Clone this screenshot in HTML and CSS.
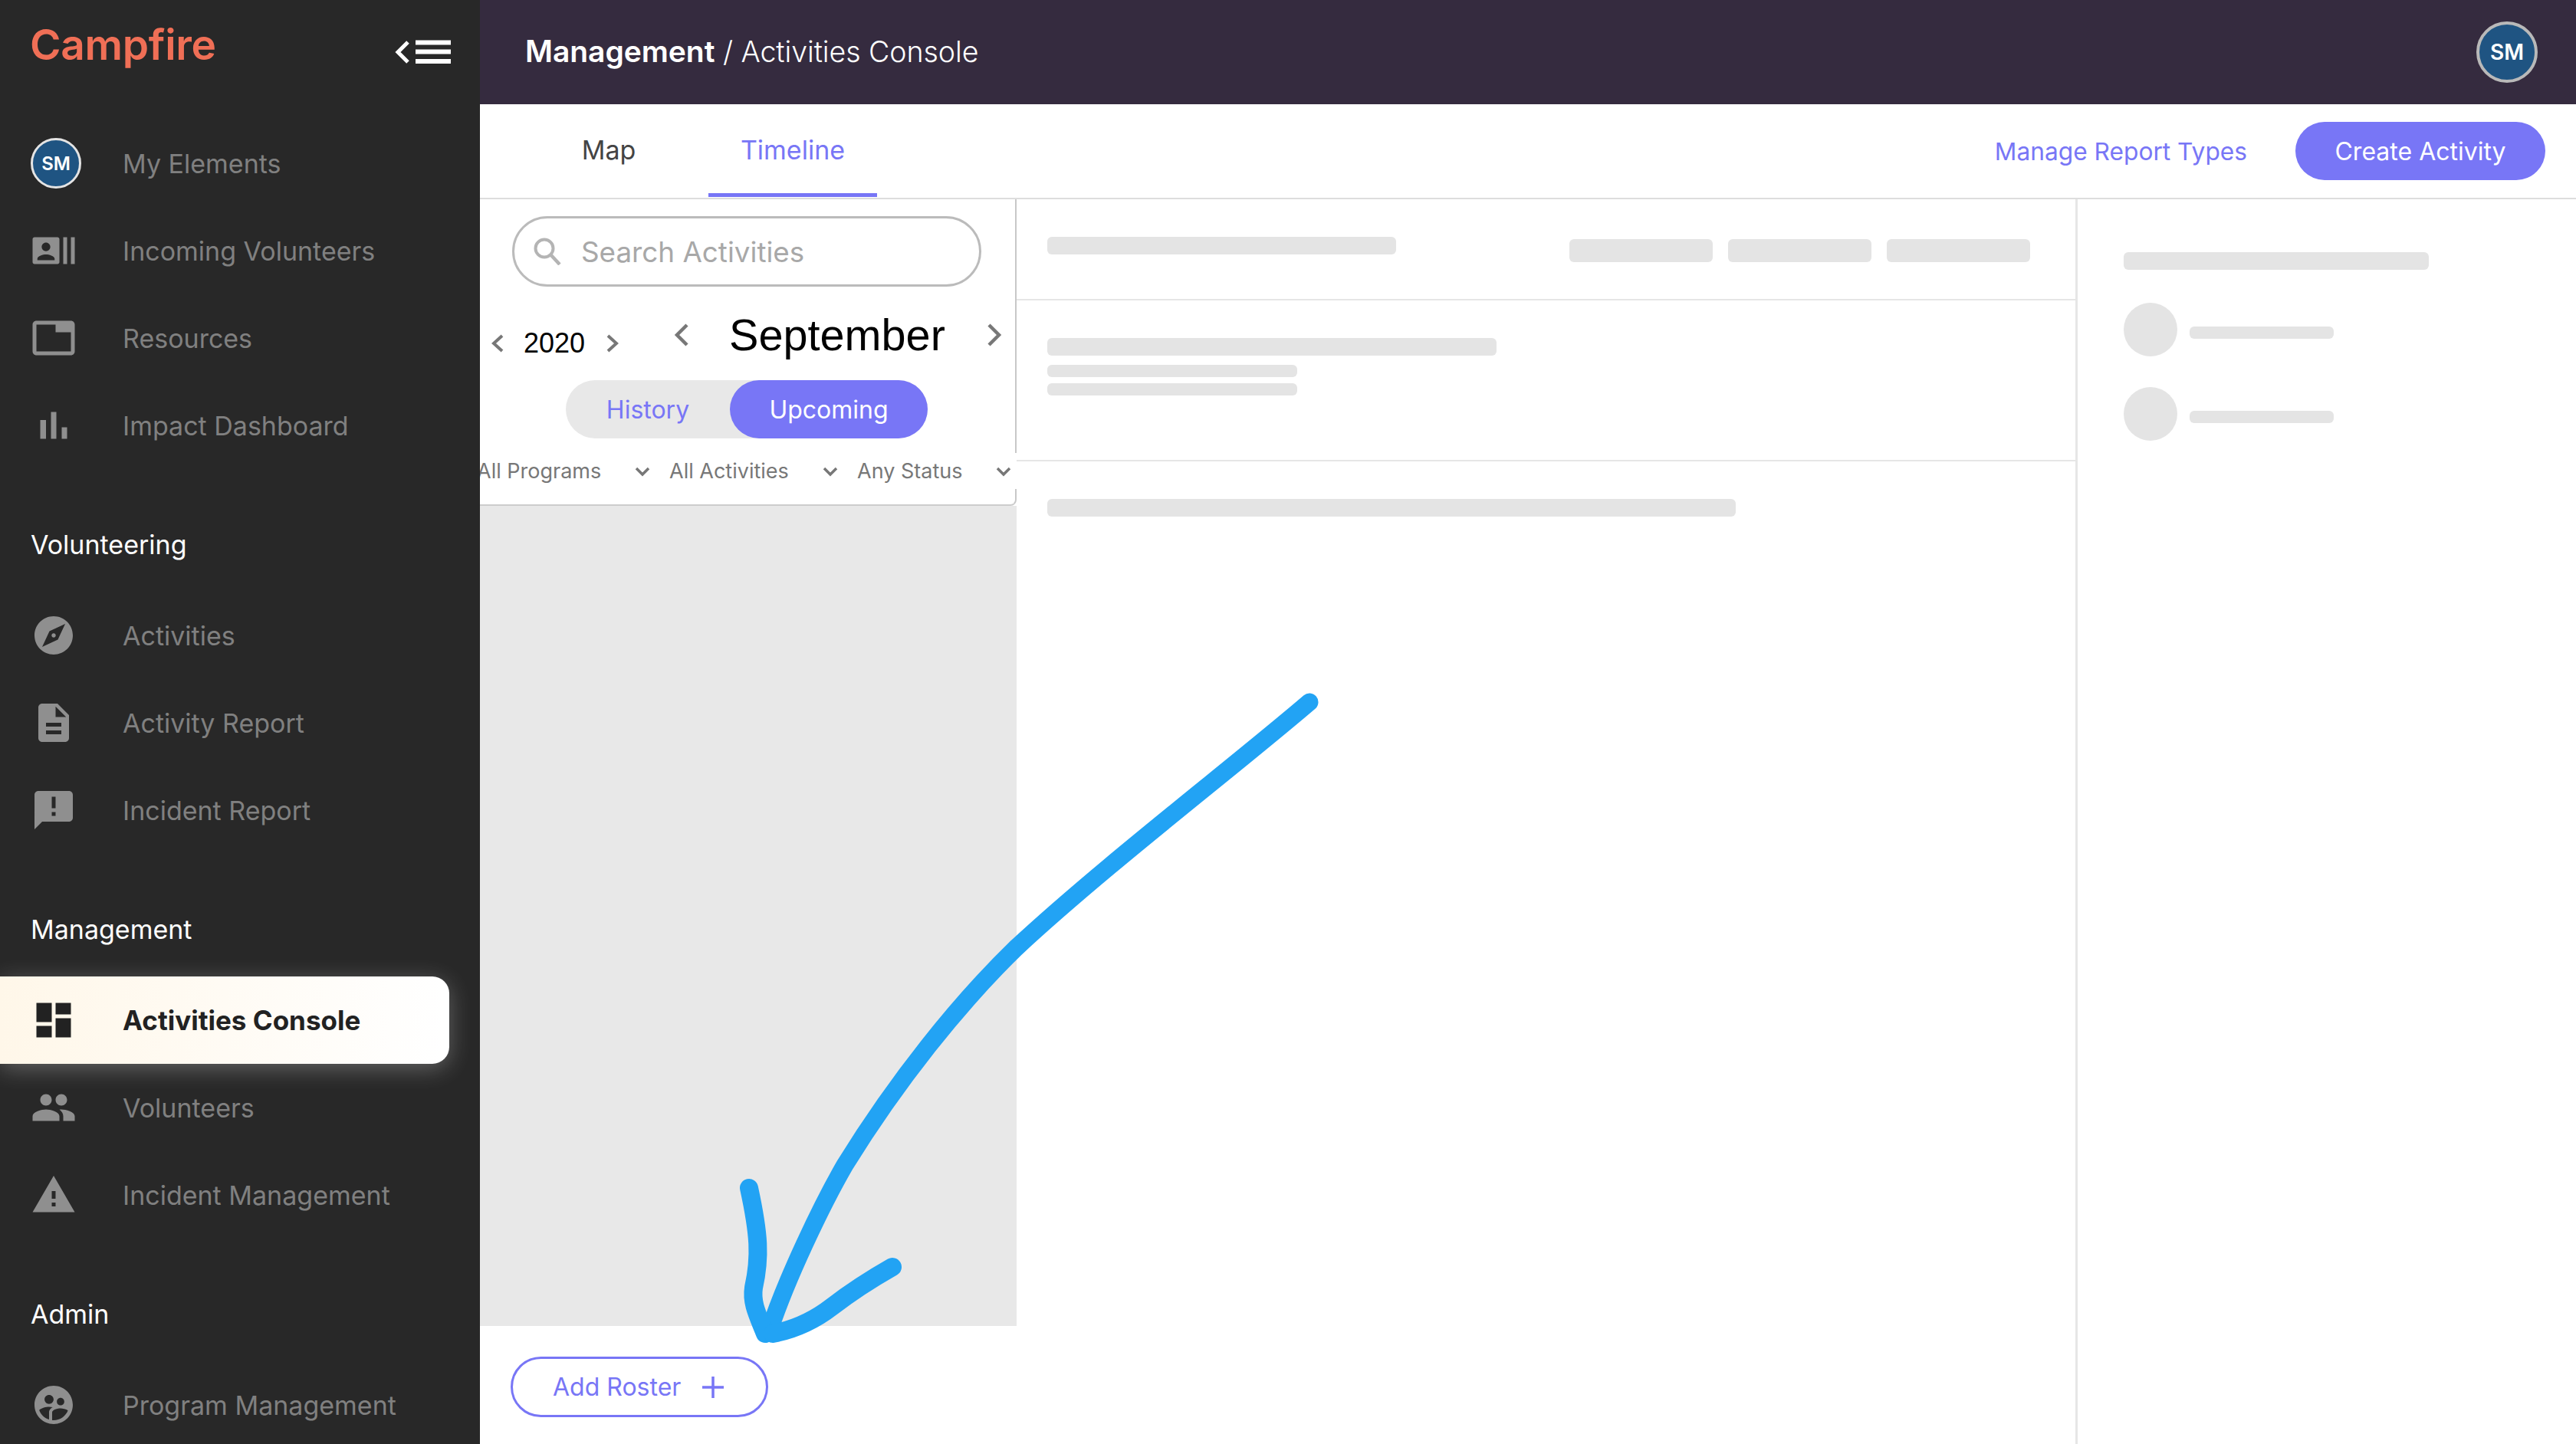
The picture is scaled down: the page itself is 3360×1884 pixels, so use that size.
FILE: index.html
```html
<!DOCTYPE html>
<html lang="en">
<head>
  <meta charset="UTF-8" />
  <title>Campfire - Activities Console</title>
  <link rel="stylesheet" href="styles.css">
</head>
<body>
  <div class="app">
    <aside class="sidebar">
      <div class="side-head">
        <div class="logo">Campfire</div>
        <svg class="collapse" width="74" height="32" viewBox="0 0 74 32">
          <path d="M17 3 L4 16 L17 29" fill="none" stroke="#fff" stroke-width="5"/>
          <path d="M27 3.500h46M27 15.500h46M27 28h46" fill="none" stroke="#fff" stroke-width="6"/>
        </svg>
      </div>

      <nav class="nav">
        <a class="nav-item"><span class="avatar avatar-small">SM</span><span>My Elements</span></a>
        <a class="nav-item"><svg class="nav-icon" viewBox="0 0 24 24"><path d="M21 5v14h2V5h-2zm-4 14h2V5h-2v14zM14 5H2c-.55 0-1 .45-1 1v12c0 .55.45 1 1 1h12c.55 0 1-.45 1-1V6c0-.55-.45-1-1-1zM8 7.750c1.240 0 2.250 1.010 2.250 2.250S9.240 12.250 8 12.250 5.750 11.240 5.750 10 6.760 7.750 8 7.750zM12.500 17h-9v-.75c0-1.500 3-2.250 4.500-2.250s4.500.75 4.500 2.250V17z"/></svg><span>Incoming Volunteers</span></a>
        <a class="nav-item"><svg class="nav-icon" viewBox="0 0 24 24"><path d="M21 3H3c-1.100 0-2 .9-2 2v14c0 1.100.9 2 2 2h18c1.100 0 2-.9 2-2V5c0-1.100-.9-2-2-2zm0 16H3V5h10v4h8v10z"/></svg><span>Resources</span></a>
        <a class="nav-item"><svg class="nav-icon" viewBox="0 0 24 24"><path d="M5 9.200h3V19H5zM10.600 5h2.800v14h-2.800zm5.600 8H19v6h-2.800z"/></svg><span>Impact Dashboard</span></a>

        <div class="nav-label">Volunteering</div>
        <a class="nav-item"><svg class="nav-icon" viewBox="0 0 24 24"><path d="M12 10.900c-.61 0-1.100.49-1.100 1.100s.49 1.100 1.100 1.100c.61 0 1.100-.49 1.100-1.100s-.49-1.100-1.100-1.100zM12 2C6.480 2 2 6.480 2 12s4.480 10 10 10 10-4.480 10-10S17.520 2 12 2zm2.190 12.190L6 18l3.810-8.190L18 6l-3.810 8.190z"/></svg><span>Activities</span></a>
        <a class="nav-item"><svg class="nav-icon" viewBox="0 0 24 24"><path d="M14 2H6c-1.100 0-1.990.9-1.990 2L4 20c0 1.100.89 2 1.990 2H18c1.100 0 2-.9 2-2V8l-6-6zm2 16H8v-2h8v2zm0-4H8v-2h8v2zm-3-5V3.500L18.500 9H13z"/></svg><span>Activity Report</span></a>
        <a class="nav-item"><svg class="nav-icon" viewBox="0 0 24 24"><path d="M20 2H4c-1.100 0-1.990.9-1.990 2L2 22l4-4h14c1.100 0 2-.9 2-2V4c0-1.100-.9-2-2-2zm-7 9h-2V5h2v6zm0 4h-2v-2h2v2z"/></svg><span>Incident Report</span></a>

        <div class="nav-label">Management</div>
        <a class="nav-item active"><svg class="nav-icon" viewBox="0 0 24 24"><path d="M3 13h8V3H3v10zm0 8h8v-6H3v6zm10 0h8V11h-8v10zm0-18v6h8V3h-8z"/></svg><span>Activities Console</span></a>
        <a class="nav-item"><svg class="nav-icon" viewBox="0 0 24 24"><path d="M16 11c1.660 0 2.990-1.340 2.990-3S17.660 5 16 5c-1.660 0-3 1.340-3 3s1.340 3 3 3zm-8 0c1.660 0 2.990-1.340 2.990-3S9.660 5 8 5C6.340 5 5 6.340 5 8s1.340 3 3 3zm0 2c-2.330 0-7 1.170-7 3.500V19h14v-2.500c0-2.330-4.670-3.500-7-3.500zm8 0c-.29 0-.62.02-.97.05 1.160.84 1.970 1.970 1.970 3.450V19h6v-2.500c0-2.330-4.670-3.500-7-3.500z"/></svg><span>Volunteers</span></a>
        <a class="nav-item"><svg class="nav-icon" viewBox="0 0 24 24"><path d="M1 21h22L12 2 1 21zm12-3h-2v-2h2v2zm0-4h-2v-4h2v4z"/></svg><span>Incident Management</span></a>

        <div class="nav-label">Admin</div>
        <a class="nav-item"><svg class="nav-icon" viewBox="0 0 24 24"><path d="M11.990 2c-5.520 0-10 4.480-10 10s4.480 10 10 10 10-4.480 10-10-4.480-10-10-10zm3.610 6.340c1.070 0 1.930.86 1.930 1.930 0 1.070-.86 1.930-1.930 1.930-1.070 0-1.930-.86-1.930-1.930-.01-1.070.86-1.930 1.930-1.930zm-6-1.580c1.300 0 2.360 1.060 2.360 2.360 0 1.300-1.060 2.360-2.360 2.360s-2.360-1.060-2.360-2.360c0-1.310 1.050-2.360 2.360-2.360zm0 9.130v3.750c-2.400-.75-4.300-2.600-5.140-4.960 1.050-1.120 3.670-1.690 5.140-1.690.53 0 1.200.08 1.900.22-1.640.87-1.900 2.020-1.900 2.680zM11.990 20c-.27 0-.53-.01-.79-.04v-4.070c0-1.420 2.940-2.130 4.400-2.130 1.070 0 2.920.39 3.840 1.150-1.170 2.970-4.060 5.090-7.450 5.090z"/></svg><span>Program Management</span></a>
      </nav>
    </aside>

    <main class="main">
      <header class="topbar">
        <div class="crumbs"><b>Management</b> / Activities Console</div>
        <span class="avatar avatar-top">SM</span>
      </header>

      <div class="tabs">
        <a class="tab">Map</a>
        <a class="tab tab-on">Timeline</a>
        <div class="tab-actions">
          <a class="link">Manage Report Types</a>
          <a class="btn-create">Create Activity</a>
        </div>
      </div>

      <div class="content">
        <section class="left">
          <div class="card">
            <div class="search">
              <svg width="36" height="36" viewBox="0 0 36 36"><circle cx="14" cy="14" r="11.500" fill="none" stroke="#b4b4b4" stroke-width="4"/><path d="M22 22 L34 35" stroke="#b4b4b4" stroke-width="4.500"/></svg>
              <span>Search Activities</span>
            </div>
            <div class="date-row">
              <div class="year">
                <svg class="chev-s" viewBox="0 0 16 24"><path d="M14 2 L3 12 L14 22"/></svg>
                <span>2020</span>
                <svg class="chev-s" viewBox="0 0 16 24"><path d="M2 2 L13 12 L2 22"/></svg>
              </div>
              <div class="month">
                <svg class="chev-m" viewBox="0 0 20 30"><path d="M17 2 L4 15 L17 28"/></svg>
                <span>September</span>
                <svg class="chev-m" viewBox="0 0 20 30"><path d="M3 2 L16 15 L3 28"/></svg>
              </div>
            </div>
            <div class="toggle">
              <span class="toggle-off">History</span>
              <span class="toggle-on">Upcoming</span>
            </div>
            <div class="filters">
              <div class="filter f-programs"><span>All Programs</span><svg class="chev-d" viewBox="0 0 20 14"><path d="M2 3 L10 11 L18 3"/></svg></div>
              <div class="filter f-activities"><span>All Activities</span><svg class="chev-d" viewBox="0 0 20 14"><path d="M2 3 L10 11 L18 3"/></svg></div>
              <div class="filter f-status"><span>Any Status</span><svg class="chev-d" viewBox="0 0 20 14"><path d="M2 3 L10 11 L18 3"/></svg></div>
            </div>
          </div>
          <div class="roster-list"></div>
          <div class="roster-foot">
            <a class="btn-roster">
              <span>Add Roster</span>
              <svg width="28" height="28" viewBox="0 0 28 28"><path d="M14 0v28M0 14h28" stroke="#7876f6" stroke-width="3.500"/></svg>
            </a>
          </div>
        </section>

        <section class="middle">
          <div class="row row-one">
            <div class="skel s-455"></div>
            <div class="skel-group">
              <div class="skel s-chip"></div>
              <div class="skel s-chip"></div>
              <div class="skel s-chip"></div>
            </div>
          </div>
          <div class="row row-two">
            <div class="skel s-586"></div>
            <div class="skel s-326 first"></div>
            <div class="skel s-326"></div>
          </div>
          <div class="row-three">
            <div class="skel s-898"></div>
          </div>
        </section>

        <section class="right">
          <div class="skel s-398"></div>
          <div class="person">
            <div class="skel-dot"></div>
            <div class="skel s-188"></div>
          </div>
          <div class="person">
            <div class="skel-dot"></div>
            <div class="skel s-188"></div>
          </div>
        </section>
      </div>
    </main>

    <!-- hand drawn arrow sits over the whole page -->
    <svg class="scribble" viewBox="0 0 3360 1884">
      <path class="stroke-main" d="M1708 916 C1610 1000 1440 1130 1325 1237 C1250 1310 1170 1410 1102 1520 C1072 1572 1025 1670 1003 1738"/>
      <path class="stroke-barb" d="M977 1550 C990 1610 992 1640 983 1680 C980 1700 988 1715 998 1740"/>
      <path class="stroke-barb" d="M1164 1653 Q1120 1678 1085 1705 T1008 1740"/>
    </svg>
  </div>
</body>
</html>
```

FILE: styles.css
```css
* { margin: 0; padding: 0; box-sizing: border-box; }
html, body { width: 3360px; height: 1884px; overflow: hidden; }
body { font-family: Inter, "Liberation Sans", sans-serif; background: #fff; }

.app { position: relative; display: flex; width: 3360px; height: 1884px; overflow: hidden; }

/* sidebar */
.sidebar { flex: 0 0 626px; background: #282828; position: relative; z-index: 2; overflow: hidden; }
.side-head { display: flex; justify-content: space-between; height: 156px; padding: 22px 37px 0 39px; }
.logo { font-size: 55px; font-weight: 600; line-height: 72px; color: #f06f56; letter-spacing: -0.3px; }
.collapse { margin-top: 30px; margin-right: 0; }

.nav-item {
  display: flex; align-items: center; gap: 60px;
  height: 114px; padding-left: 40px;
  font-size: 34px; color: #808080;
}
.nav-icon { flex: 0 0 60px; width: 60px; height: 60px; fill: #8f8f8f; }
.nav-label { margin: 72px 0 34px 40px; font-size: 34px; line-height: 54px; color: #fff; }
.nav-item.active {
  width: 586px; color: #222; font-size: 35px; font-weight: 700;
  background: linear-gradient(90deg, #fff7e9, #fff);
  border-radius: 0 22px 22px 0;
  box-shadow: 0 6px 30px rgba(255, 255, 255, 0.28);
  position: relative;
}
.nav-item.active .nav-icon { fill: #222; }

.avatar {
  display: flex; align-items: center; justify-content: center;
  background: #1f5482; color: #fff; font-weight: 600; border-radius: 50%;
}
.avatar-small { flex: 0 0 66px; width: 66px; height: 66px; margin-right: -6px; border: 3px solid #e4e4e4; font-size: 24px; }
.avatar-top { width: 80px; height: 80px; border: 4px solid #b9b9b9; font-size: 28px; }

/* main */
.main { flex: 1; display: flex; flex-direction: column; min-width: 0; }
.topbar {
  flex: 0 0 136px; display: flex; align-items: center; justify-content: space-between;
  padding: 0 50px 0 59px; background: #352b3f; color: #fff;
}
.crumbs { font-size: 37.5px; font-weight: 300; margin-top: -4px; letter-spacing: -0.05px; }
.crumbs b { font-size: 39px; font-weight: 600; }

.tabs {
  flex: 0 0 124px; display: flex; padding-left: 58px; gap: 20px;
  border-bottom: 2px solid #ddd;
}
.tab {
  display: flex; align-items: center; justify-content: center;
  width: 220px; height: 121px; padding-top: 2px; border-bottom: 5px solid transparent;
  font-size: 34px; color: #444;
}
.tab-on { color: #7876f6; border-bottom-color: #7876f6; }
.tab-actions { margin-left: auto; padding-right: 40px; display: flex; align-items: center; gap: 63px; }
.link { font-size: 31.7px; color: #7876f6; }
.btn-create {
  display: flex; align-items: center; justify-content: center;
  width: 326px; height: 76px; border-radius: 38px;
  background: #7876f6; color: #fff; font-size: 32px;
}

.content { flex: 1; display: flex; min-height: 0; }

/* left panel */
.left { flex: 0 0 700px; display: flex; flex-direction: column; }
.card {
  flex: 0 0 400px; padding-top: 22px; background: #fff;
  border-right: 2px solid #c8c8c8; border-bottom: 2px solid #ccc;
  border-radius: 0 0 8px 0;
}
.search {
  display: flex; align-items: center; gap: 26px;
  width: 612px; height: 92px; margin-left: 42px; padding-left: 25px;
  border: 3px solid #bbb; border-radius: 46px;
  font-size: 36.8px; color: #a8a8a8;
}
.date-row { display: flex; align-items: center; height: 116px; margin-top: 6px; font-family: "Liberation Sans", Arial, sans-serif; color: #000; }
.year { display: flex; align-items: center; gap: 26px; margin: 20px 0 0 15px; font-size: 36px; }
.year span { margin-right: 2px; }
.month { display: flex; align-items: center; gap: 52px; margin-left: 72px; font-size: 57.6px; margin-top: -2px; }
.month span { margin-right: 2px; }
.chev-s { width: 16px; height: 24px; fill: none; stroke: #777; stroke-width: 4; }
.chev-m { width: 20px; height: 30px; fill: none; stroke: #777; stroke-width: 4.500; }

.toggle {
  display: flex; width: 472px; height: 76px; margin-left: 112px;
  background: #e8e8e8; border-radius: 38px; font-size: 32px;
}
.toggle-off { flex: 0 0 214px; display: flex; align-items: center; justify-content: center; color: #7876f6; }
.toggle-on { flex: 1; display: flex; align-items: center; justify-content: center; color: #fff; background: #7876f6; border-radius: 38px; }

.filters {
  display: flex; gap: 25px; height: 47px; margin: 19px -2px 0 -4px;
  background: #fff; position: relative;
  font-size: 27px; color: #777;
}
.filter { display: flex; align-items: center; justify-content: space-between; }
.f-programs { width: 226px; }
.f-activities { width: 220px; }
.f-status { width: 201px; }
.chev-d { width: 20px; height: 14px; fill: none; stroke: #777; stroke-width: 3.500; }

.roster-list { flex: 1; background: #e8e8e8; }
.roster-foot { flex: 0 0 154px; padding: 40px 0 0 40px; }
.btn-roster {
  display: flex; align-items: center; gap: 28px;
  width: 336px; height: 79px; padding-left: 52px;
  border: 3px solid #7876f6; border-radius: 40px;
  font-size: 32px; color: #7876f6;
}

/* loading placeholders */
.middle { flex: 0 0 1384px; display: flex; flex-direction: column; border-right: 3px solid #e6e6e6; }
.row { border-bottom: 2px solid #e6e6e6; padding-left: 40px; }
.row-one { flex: 0 0 132px; display: flex; justify-content: space-between; padding: 49px 59px 0 40px; }
.row-two { flex: 0 0 210px; padding-top: 49px; }
.row-three { padding: 49px 0 0 40px; }

.skel { background: #e4e4e4; border-radius: 6px; }
.s-455 { width: 455px; height: 23px; }
.s-586 { width: 586px; height: 23px; }
.s-898 { width: 898px; height: 23px; }
.s-398 { width: 398px; height: 23px; }
.s-326 { width: 326px; height: 16px; margin-top: 8px; }
.s-326.first { margin-top: 12px; }
.s-188 { width: 188px; height: 16px; margin-top: 8px; }
.s-chip { width: 187px; height: 30px; }
.skel-group { display: flex; gap: 20px; margin-top: 3px; }

.right { flex: 1; padding: 69px 0 0 60px; }
.person { display: flex; align-items: center; gap: 16px; margin-top: 40px; }
.s-398 + .person { margin-top: 43px; }
.skel-dot { width: 70px; height: 70px; border-radius: 50%; background: #e4e4e4; }

/* annotation */
.scribble { position: absolute; top: 0; left: 0; width: 3360px; height: 1884px; z-index: 5; pointer-events: none; }
.scribble path { fill: none; stroke: #22a3f4; stroke-linecap: round; stroke-linejoin: round; }
.stroke-main { stroke-width: 23; }
.stroke-barb { stroke-width: 24; }
```
